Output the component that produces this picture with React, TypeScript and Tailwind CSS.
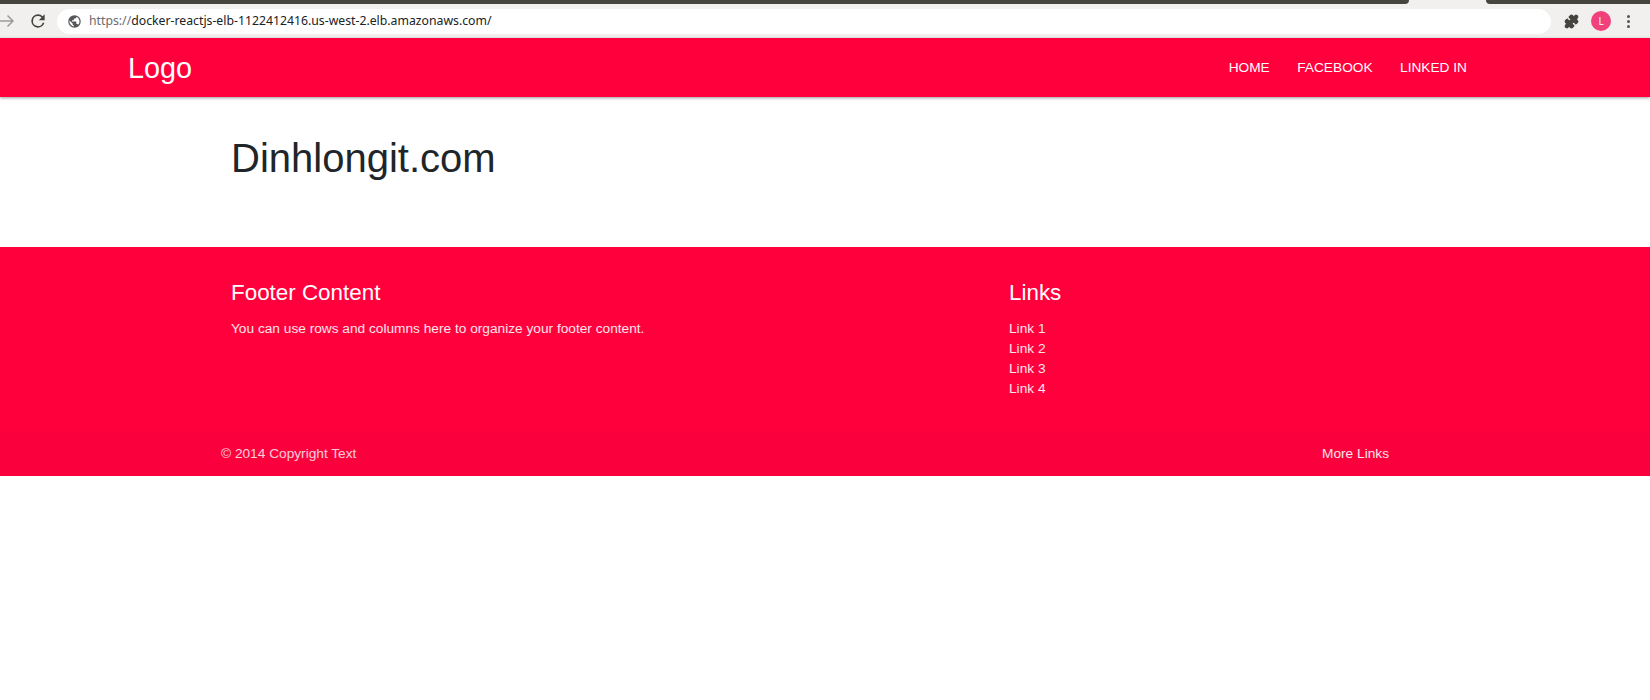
import { Puzzle } from 'lucide-react';

const links = ['Link 1', 'Link 2', 'Link 3', 'Link 4'];

function BrowserBar() {
  return (
    <div className="bg-[#f1f0ee]">
      {/* Tab strip edge */}
      <div className="flex h-[4px] bg-[#f1f0ee]">
        <div className="w-[1409px] rounded-br-[5px] bg-[#45453d]" />
        <div className="ml-[77px] flex-1 rounded-bl-[5px] bg-[#45453d]" />
      </div>
      {/* Toolbar */}
      <div className="flex h-[34px] items-center">
        <svg className="h-[16px] w-[16px] shrink-0 -ml-[1px]" viewBox="0 0 16 16" fill="none" stroke="#9b9b99" strokeWidth="1.5">
          <path d="M1 8h13M8.5 2.5 14 8l-5.5 5.5" />
        </svg>
        <svg className="ml-[13px] h-[20px] w-[20px] shrink-0" viewBox="0 0 24 24" fill="#45453f">
          <path d="M17.65 6.35A7.96 7.96 0 0 0 12 4a8 8 0 1 0 7.73 10h-2.08A6 6 0 1 1 12 6c1.66 0 3.14.69 4.22 1.78L13 11h7V4l-2.35 2.35z" />
        </svg>
        <div className="ml-[9px] flex h-[25px] w-[1494px] shrink-0 items-center rounded-full bg-white pl-[10px]">
          <svg className="h-[15px] w-[15px] shrink-0" viewBox="0 0 24 24" fill="#56565a">
            <path d="M12 2a10 10 0 1 0 0 20 10 10 0 0 0 0-20zm-1 17.93A8 8 0 0 1 4.21 10.2L9 15v1a2 2 0 0 0 2 2v1.93zm6.9-2.54A2 2 0 0 0 16 16h-1v-3a1 1 0 0 0-1-1H8v-2h2a1 1 0 0 0 1-1V7h2a2 2 0 0 0 2-2v-.41a8 8 0 0 1 2.9 12.8z" />
          </svg>
          <span className="ml-[7px] font-['Noto_Sans',sans-serif] text-[12.25px] leading-none whitespace-nowrap text-[#202124]">
            <span className="text-[#6b6b6f]">https://</span>docker-reactjs-elb-1122412416.us-west-2.elb.amazonaws.com/
          </span>
        </div>
        <Puzzle className="ml-[13px] h-[15px] w-[15px] shrink-0 fill-[#45453f] text-[#45453f]" />
        <div className="ml-[12px] flex h-[20px] w-[20px] shrink-0 items-center justify-center rounded-full bg-[#f0417a] font-['Noto_Sans',sans-serif] text-[10px] text-white">
          L
        </div>
        <div className="ml-[16px] flex shrink-0 flex-col gap-[2px]">
          <span className="h-[3px] w-[3px] rounded-full bg-[#55554f]" />
          <span className="h-[3px] w-[3px] rounded-full bg-[#55554f]" />
          <span className="h-[3px] w-[3px] rounded-full bg-[#55554f]" />
        </div>
      </div>
    </div>
  );
}

export default function App() {
  return (
    <div className="min-h-[700px] bg-white font-['Liberation_Sans',Arial,sans-serif]">
      <BrowserBar />

      <nav className="flex h-[59px] items-center justify-between bg-[#ff003c] pl-[128px] pr-[183px] text-white shadow-[0_1px_3px_rgba(0,0,0,0.4)]">
        <a className="pt-[2px] text-[28.8px] leading-none">Logo</a>
        <ul className="flex gap-[27.5px] pt-[1px] text-[13.7px]">
          <li>HOME</li>
          <li>FACEBOOK</li>
          <li>LINKED IN</li>
        </ul>
      </nav>

      <main className="h-[150px] pl-[231px] pt-[36px]">
        <h1 className="text-[40px] leading-[50px] text-[#212529]">Dinhlongit.com</h1>
      </main>

      <footer className="bg-[#ff003c] text-white">
        <div className="flex h-[184px] pl-[231px] pt-[33px]">
          <div className="w-[778px]">
            <h5 className="text-[22.4px] leading-[26px]">Footer Content</h5>
            <p className="mt-[13px] text-[13.7px] leading-[20px] text-white/90">
              You can use rows and columns here to organize your footer content.
            </p>
          </div>
          <div>
            <h5 className="text-[22.4px] leading-[26px]">Links</h5>
            <ul className="mt-[13px] text-[13.7px] leading-[20px] text-white/90">
              {links.map((link) => (
                <li key={link}>{link}</li>
              ))}
            </ul>
          </div>
        </div>
        <div className="flex h-[45px] items-center justify-between bg-[#fa003c] pl-[221px] pr-[261px] pt-[1px] text-[13.7px] text-white/80">
          <span>© 2014 Copyright Text</span>
          <a className="text-white/90">More Links</a>
        </div>
      </footer>
    </div>
  );
}
